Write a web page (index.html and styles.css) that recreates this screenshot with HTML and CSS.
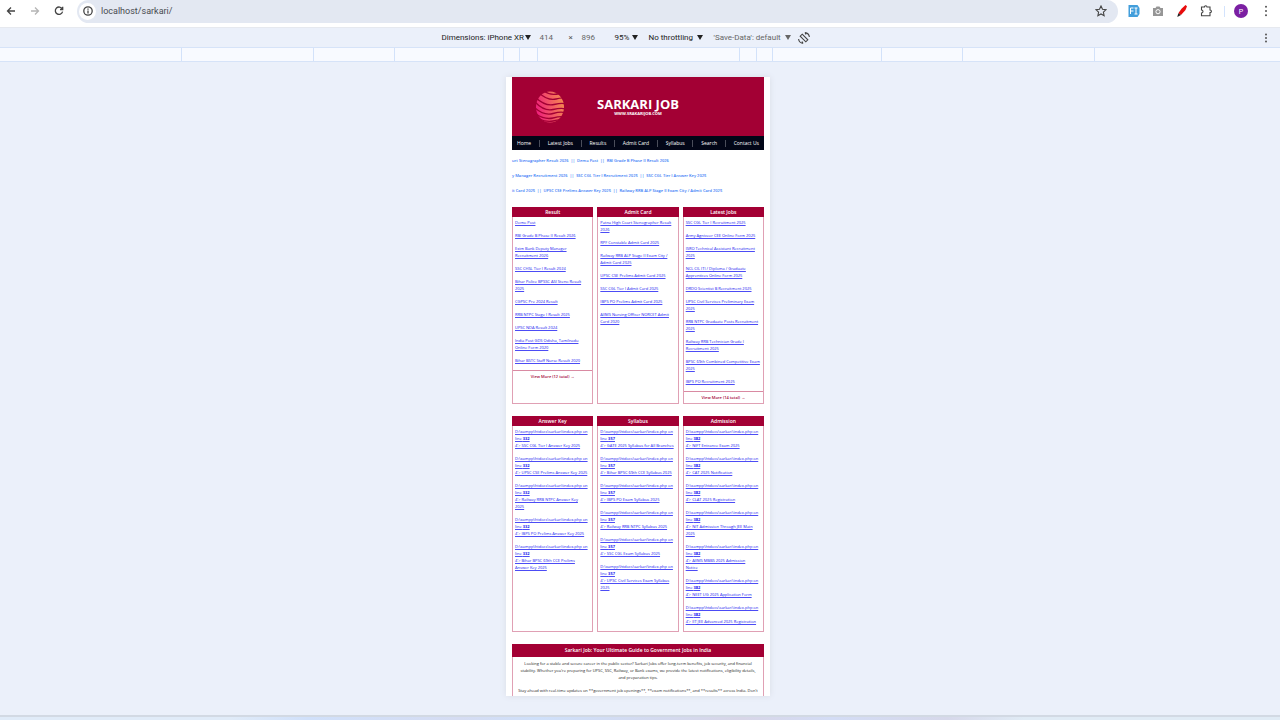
FILE: index.html
```html
<!DOCTYPE html>
<html lang="en">
<head>
<meta charset="utf-8">
<title>localhost/sarkari</title>
<link rel="stylesheet" href="styles.css">
</head>
<body>
<header class="browser-bar">
  <button class="icon-btn" aria-label="Back"><svg viewBox="0 0 12 12"><path d="M10 6H2.500M6 2.500 2.500 6 6 9.500"/></svg></button>
  <button class="icon-btn disabled" aria-label="Forward"><svg viewBox="0 0 12 12"><path d="M2 6h7.500M6 2.500 9.500 6 6 9.500"/></svg></button>
  <button class="icon-btn" aria-label="Reload"><svg viewBox="0 0 12 12"><path d="M9.300 4A3.700 3.700 0 1 0 9.600 6.700M9.700 1.700V4.500H7"/></svg></button>
  <div class="address">
    <button class="info" aria-label="Site information"><svg viewBox="0 0 12 12"><circle cx="6" cy="6" r="4.200"/><path d="M6 5.500v3M6 3.500v1.200"/></svg></button>
    <input class="url" type="text" aria-label="Address" value="localhost/sarkari/">
    <button class="icon-btn" aria-label="Bookmark"><svg class="thin" viewBox="0 0 12 12"><path d="M6 1l1.500 3.300 3.500.4-2.600 2.400.7 3.600L6 8.900l-3.100 1.800.7-3.600L1 4.700l3.500-.4z"/></svg></button>
  </div>
  <div class="extensions">
    <button class="icon-btn" aria-label="Font finder"><svg viewBox="0 0 12 12"><path class="sky" d="M.5 0h9l2 3v6l-2 3h-9z"/><path class="white-line" d="M2.500 9V3h3M2.500 6h3M6.500 3h3M6.500 9h3M8 3v6"/></svg></button>
    <button class="icon-btn" aria-label="Screenshot"><svg viewBox="0 0 12 12"><path class="grey" d="M1 3h2.500l1-1.500h3L8.500 3H11v8H1z"/><circle class="lens" cx="6" cy="6.700" r="2.100"/></svg></button>
    <button class="icon-btn" aria-label="Marker"><svg viewBox="0 0 12 12"><path class="red" d="M9.500 0 11 1.200 9.500 5 5 10 2.300 8.300 5.500 3.800z"/><path class="black" d="M2.300 8.300 5 10 1.300 12z"/></svg></button>
    <button class="icon-btn" aria-label="Extensions"><svg class="thin" viewBox="0 0 12 12"><path d="M1.500 2H4.500Q4.500 .8 5.700 .8T7 2H10V5Q11.400 5 11.400 6.300T10 7.600V10.800H1.500V8Q3 8 3 6.500T1.500 5z"/></svg></button>
    <span class="divider"></span>
    <button class="avatar">P</button>
    <button class="icon-btn" aria-label="Menu"><svg class="dots" viewBox="0 0 12 12"><circle cx="6" cy="1.700" r="1"/><circle cx="6" cy="6" r="1"/><circle cx="6" cy="10.300" r="1"/></svg></button>
  </div>
</header>
<div class="device-bar">
  <div class="device-tools">
    <button class="drop wide">Dimensions: iPhone XR <i class="caret"></i></button>
    <input class="dim" aria-label="Width" value="414"><span class="times">×</span><input class="dim" aria-label="Height" value="896">
    <button class="drop zoom">95% <i class="caret"></i></button>
    <button class="drop throttle">No throttling <i class="caret"></i></button>
    <button class="drop muted">'Save-Data': default <i class="caret"></i></button>
    <button class="icon-btn" aria-label="Rotate"><svg class="thin" viewBox="0 0 12 12"><path d="M4.200 2.200 9.800 7.800 7.800 9.800 2.200 4.200zM7 .6Q11 1.200 11.400 5M5 11.400Q1 10.800.6 7M7 .6l1 2M5 11.400 4 9.400"/></svg></button>
  </div>
  <button class="icon-btn more" aria-label="More options"><svg class="dots" viewBox="0 0 12 12"><circle cx="6" cy="2.500" r="1"/><circle cx="6" cy="6" r="1"/><circle cx="6" cy="9.500" r="1"/></svg></button>
</div>
<div class="ruler"><i></i><i></i><i></i><i></i><i></i><i></i><i></i><i></i><i></i><i></i><i></i><i></i><i></i></div>
<main class="stage">
  <div class="device">
    <header class="banner">
      <svg class="globe" viewBox="0 0 30 32"><defs><linearGradient id="g" x1="0" y1="0.600" x2="1" y2="0.300"><stop offset="0" stop-color="#ee1f7c"/><stop offset="1" stop-color="#f58a50"/></linearGradient><clipPath id="c"><ellipse cx="15" cy="16" rx="15" ry="16"/></clipPath></defs><ellipse cx="15" cy="16" rx="14" ry="15.500" fill="url(#g)" stroke="none"/><g clip-path="url(#c)" fill="none" stroke="#a30034" stroke-width="1.300"><path d="M9 0Q15 5 25 2.500"/><path d="M4 2Q13 10 21 8T30 8"/><path d="M0 6Q10 15.500 19 13.500T30 13"/><path d="M0 11Q9 20.500 18 18.500T30 18"/><path d="M0 17Q9 25 18 22.500T30 22"/><path d="M1 23Q10 29 18 27T29 26"/><path d="M4 28Q12 31.500 18 30T26 29"/></g></svg>
      <div class="brand"><h1>SARKARI JOB</h1><p>WWW.SRAKARIJOB.COM</p></div>
    </header>
    <nav class="menu"><a href="#">Home</a><i></i><a href="#">Latest Jobs</a><i></i><a href="#">Results</a><i></i><a href="#">Admit Card</a><i></i><a href="#">Syllabus</a><i></i><a href="#">Search</a><i></i><a href="#">Contact Us</a></nav>
    <div class="tickers">
      <p>urt Stenographer Result 2026 &nbsp;||&nbsp; Demo Post &nbsp;||&nbsp; RBI Grade B Phase II Result 2026</p>
      <p>y Manager Recruitment 2026 &nbsp;||&nbsp; SSC CGL Tier I Recruitment 2025 &nbsp;||&nbsp; SSC CGL Tier I Answer Key 2025</p>
      <p>it Card 2025 &nbsp;||&nbsp; UPSC CSE Prelims Answer Key 2025 &nbsp;||&nbsp; Railway RRB ALP Stage II Exam City / Admit Card 2025</p>
    </div>
    <div class="boxes">
      <section class="box"><h2>Result</h2><ul>
        <li><a href="#">Demo Post</a></li>
        <li><a href="#">RBI Grade B Phase II Result 2026</a></li>
        <li><a href="#">Exim Bank Deputy Manager<br>Recruitment 2026</a></li>
        <li><a href="#">SSC CHSL Tier I Result 2024</a></li>
        <li><a href="#">Bihar Police BPSSC ASI Steno Result<br>2025</a></li>
        <li><a href="#">CGPSC Pre 2024 Result</a></li>
        <li><a href="#">RRB NTPC Stage I Result 2025</a></li>
        <li><a href="#">UPSC NDA Result 2024</a></li>
        <li><a href="#">India Post GDS Odisha, Tamilnadu<br>Online Form 2020</a></li>
        <li><a href="#">Bihar BSTC Staff Nurse Result 2020</a></li>
      </ul><a class="view" href="#">View More (12 total) →</a></section>
      <section class="box"><h2>Admit Card</h2><ul>
        <li><a href="#">Patna High Court Stenographer Result<br>2026</a></li>
        <li><a href="#">RPF Constable Admit Card 2025</a></li>
        <li><a href="#">Railway RRB ALP Stage II Exam City /<br>Admit Card 2025</a></li>
        <li><a href="#">UPSC CSE Prelims Admit Card 2025</a></li>
        <li><a href="#">SSC CGL Tier I Admit Card 2025</a></li>
        <li><a href="#">IBPS PO Prelims Admit Card 2025</a></li>
        <li><a href="#">AIIMS Nursing Officer NORCET Admit<br>Card 2020</a></li>
      </ul></section>
      <section class="box"><h2>Latest Jobs</h2><ul>
        <li><a href="#">SSC CGL Tier I Recruitment 2025</a></li>
        <li><a href="#">Army Agniveer CEE Online Form 2025</a></li>
        <li><a href="#">ISRO Technical Assistant Recruitment<br>2025</a></li>
        <li><a href="#">NCL CIL ITI / Diploma / Graduate<br>Apprentices Online Form 2025</a></li>
        <li><a href="#">DRDO Scientist B Recruitment 2025</a></li>
        <li><a href="#">UPSC Civil Services Preliminary Exam<br>2025</a></li>
        <li><a href="#">RRB NTPC Graduate Posts Recruitment<br>2025</a></li>
        <li><a href="#">Railway RRB Technician Grade I<br>Recruitment 2025</a></li>
        <li><a href="#">BPSC 69th Combined Competitive Exam<br>2025</a></li>
        <li><a href="#">IBPS PO Recruitment 2025</a></li>
      </ul><a class="view" href="#">View More (14 total) →</a></section>
    </div>
    <div class="boxes">
      <section class="box"><h2>Answer Key</h2><ul>
        <li><a href="#">D:\xampp\htdocs\sarkari\index.php on<br>line <b>332</b><br>4'&gt; SSC CGL Tier I Answer Key 2025</a></li>
        <li><a href="#">D:\xampp\htdocs\sarkari\index.php on<br>line <b>332</b><br>4'&gt; UPSC CSE Prelims Answer Key 2025</a></li>
        <li><a href="#">D:\xampp\htdocs\sarkari\index.php on<br>line <b>332</b><br>4'&gt; Railway RRB NTPC Answer Key<br>2025</a></li>
        <li><a href="#">D:\xampp\htdocs\sarkari\index.php on<br>line <b>332</b><br>4'&gt; IBPS PO Prelims Answer Key 2025</a></li>
        <li><a href="#">D:\xampp\htdocs\sarkari\index.php on<br>line <b>332</b><br>4'&gt; Bihar BPSC 69th CCE Prelims<br>Answer Key 2025</a></li>
      </ul></section>
      <section class="box"><h2>Syllabus</h2><ul>
        <li><a href="#">D:\xampp\htdocs\sarkari\index.php on<br>line <b>357</b><br>4'&gt; GATE 2025 Syllabus for All Branches</a></li>
        <li><a href="#">D:\xampp\htdocs\sarkari\index.php on<br>line <b>357</b><br>4'&gt; Bihar BPSC 69th CCE Syllabus 2025</a></li>
        <li><a href="#">D:\xampp\htdocs\sarkari\index.php on<br>line <b>357</b><br>4'&gt; IBPS PO Exam Syllabus 2025</a></li>
        <li><a href="#">D:\xampp\htdocs\sarkari\index.php on<br>line <b>357</b><br>4'&gt; Railway RRB NTPC Syllabus 2025</a></li>
        <li><a href="#">D:\xampp\htdocs\sarkari\index.php on<br>line <b>357</b><br>4'&gt; SSC CGL Exam Syllabus 2025</a></li>
        <li><a href="#">D:\xampp\htdocs\sarkari\index.php on<br>line <b>357</b><br>4'&gt; UPSC Civil Services Exam Syllabus<br>2025</a></li>
      </ul></section>
      <section class="box"><h2>Admission</h2><ul>
        <li><a href="#">D:\xampp\htdocs\sarkari\index.php on<br>line <b>382</b><br>4'&gt; NIFT Entrance Exam 2025</a></li>
        <li><a href="#">D:\xampp\htdocs\sarkari\index.php on<br>line <b>382</b><br>4'&gt; CAT 2025 Notification</a></li>
        <li><a href="#">D:\xampp\htdocs\sarkari\index.php on<br>line <b>382</b><br>4'&gt; CLAT 2025 Registration</a></li>
        <li><a href="#">D:\xampp\htdocs\sarkari\index.php on<br>line <b>382</b><br>4'&gt; NIT Admission Through JEE Main<br>2025</a></li>
        <li><a href="#">D:\xampp\htdocs\sarkari\index.php on<br>line <b>382</b><br>4'&gt; AIIMS MBBS 2025 Admission<br>Notice</a></li>
        <li><a href="#">D:\xampp\htdocs\sarkari\index.php on<br>line <b>382</b><br>4'&gt; NEET UG 2025 Application Form</a></li>
        <li><a href="#">D:\xampp\htdocs\sarkari\index.php on<br>line <b>382</b><br>4'&gt; IIT JEE Advanced 2025 Registration</a></li>
      </ul></section>
    </div>
    <section class="guide">
      <h2>Sarkari Job: Your Ultimate Guide to Government Jobs in India</h2>
      <p>Looking for a stable and secure career in the public sector? Sarkari Jobs offer long-term benefits, job security, and financial<br>stability. Whether you're preparing for UPSC, SSC, Railway, or Bank exams, we provide the latest notifications, eligibility details,<br>and preparation tips.</p>
      <p>Stay ahead with real-time updates on **government job openings**, **exam notifications**, and **results** across India. Don't<br>miss out on your dream job; bookmark this page and check back daily.</p>
    </section>
  </div>
</main>
<footer class="edge"></footer>
</body>
</html>
```
FILE: styles.css
```css
* { box-sizing: border-box; }
body {
  margin: 0;
  height: 100vh;
  display: flex;
  flex-direction: column;
  overflow: hidden;
  background: #ebf0fa;
  font-family: "Open Sans", "Noto Sans", sans-serif;
}
button, input {
  border: 0;
  padding: 0;
  margin: 0;
  background: none;
  font: inherit;
  color: inherit;
}
h1, h2, p, ul { margin: 0; padding: 0; }
ul { list-style: none; }
a { color: inherit; text-decoration: none; }
svg {
  display: block;
  width: 12px;
  height: 12px;
  fill: none;
  stroke: #444;
  stroke-width: 1.3;
}
svg.thin { stroke-width: 1.1; }
svg.dots { fill: #555; stroke: none; }
.browser-bar {
  display: flex;
  align-items: center;
  height: 28px;
  padding: 0 5px 5px;
  background: #fff;
  border-bottom: 1px solid #e6e9ef;
}
.icon-btn { width: 12px; height: 12px; flex: none; }
.browser-bar > .icon-btn { margin-right: 12px; }
.disabled svg { stroke: #b5b5b5; }
.address {
  flex: 1;
  display: flex;
  align-items: center;
  height: 23px;
  padding: 0 11px 0 2px;
  border-radius: 12px;
  background: #e3e8f2;
}
.info {
  display: grid;
  place-items: center;
  width: 17px;
  height: 17px;
  border-radius: 50%;
  background: #fff;
}
.url {
  flex: 1;
  margin-left: 5px;
  font: 9px/16px Roboto, sans-serif;
  color: #484b50;
}
.extensions { display: flex; align-items: center; gap: 9px; margin-left: 10px; }
.extensions .icon-btn, .avatar { margin-right: 3px; }
svg .sky { fill: #429edb; stroke: none; }
.white-line { stroke: #fff; stroke-width: 1; }
.grey { fill: #969696; stroke: none; }
.lens { stroke: #fff; stroke-width: 1; }
.red { fill: #e80c0c; stroke: none; }
.black { fill: #222; stroke: none; }
.divider { width: 1px; height: 11px; background: #d3e3fd; }
.avatar {
  width: 14px;
  height: 14px;
  border-radius: 50%;
  background: #7b1fa2;
  color: #fff;
  font-size: 8px;
  line-height: 14px;
}
.device-bar {
  display: grid;
  grid-template-columns: 441fr auto 461fr;
  align-items: center;
  height: 20px;
  padding-right: 8px;
  border-bottom: 1px solid #d6e3f8;
  font: 8px/14px Roboto, sans-serif;
  color: #222;
}
.device-tools {
  grid-column: 2;
  display: flex;
  align-items: center;
  white-space: nowrap;
}
.more { justify-self: end; }
.drop { display: flex; align-items: center; justify-content: space-between; }
.wide { width: 90px; }
.zoom { width: 24px; margin-left: 11px; }
.throttle { width: 55px; margin-left: 10px; }
.muted { width: 78px; margin: 0 7px 0 10px; color: #666; }
.caret {
  border: 3px solid transparent;
  border-top: 5px solid currentColor;
  border-bottom: 0;
}
.dim { width: 22px; margin-left: 8px; color: #666; }
.times { margin-left: 7px; width: 5px; color: #555; }
.ruler {
  display: grid;
  grid-template-columns: 182fr 132fr 81fr 109fr 16fr 18fr 202fr 17fr 16fr 109fr 81fr 132fr 185fr;
  height: 14px;
  background: #f8faff;
  border-bottom: 1px solid #d6e3f8;
}
.ruler i { border-right: 1px solid #d3e2fa; }
.ruler i:last-child { border: 0; }
.stage {
  flex: 1;
  min-height: 0;
  display: flex;
  justify-content: center;
  padding: 15px 4px 19px 0;
}
.device {
  width: 264px;
  max-width: 100%;
  padding: 0 6px;
  overflow: hidden;
  background: #fff;
  box-shadow: 0 0 6px #d9dde6;
}
.banner {
  display: grid;
  grid-template-columns: 76px 1fr 76px;
  align-items: center;
  height: 59px;
  background: #a30034;
  color: #fff;
  text-align: center;
}
.globe { width: 30px; height: 32px; margin-left: 23px; }
.brand h1 { font-size: 13px; line-height: 14px; }
.brand p { font-size: 4px; line-height: 6px; font-weight: 700; }
.menu {
  display: flex;
  align-items: center;
  justify-content: space-between;
  height: 14px;
  padding: 0 5px;
  background: #020617;
  color: #fff;
  font-size: 5px;
  line-height: 8px;
}
.menu i { width: 1px; height: 7px; background: #4a4d5a; }
.tickers {
  display: grid;
  gap: 8px;
  padding: 7px 0 13px;
  font-size: 4px;
  line-height: 7px;
  font-weight: 600;
  color: #3478f6;
  white-space: nowrap;
}
.boxes {
  display: grid;
  grid-template-columns: repeat(3, minmax(0, 1fr));
  gap: 4px;
  margin-bottom: 12px;
}
.box {
  border: 1px solid #e0a0b4;
  font-size: 4px;
  line-height: 7px;
  white-space: nowrap;
}
.box h2 {
  margin: -1px -1px 0;
  background: #a30034;
  color: #fff;
  font-size: 5px;
  line-height: 10px;
  font-weight: 600;
  text-align: center;
}
.box ul { display: grid; gap: 6px; padding: 2px 2px 6px; }
.box li a { color: #1414f0; text-decoration: underline; text-decoration-color: #4c4cf5; }
.view {
  display: block;
  border-top: 1px solid #d98aa2;
  padding: 2px 0;
  text-align: center;
  color: #a30034;
  font-weight: 600;
}
.guide {
  border: 1px solid #e0a0b4;
  font-size: 4px;
  line-height: 7px;
  text-align: center;
  color: #222;
  white-space: nowrap;
}
.guide h2 {
  margin: -1px -1px 3px;
  background: #a30034;
  color: #fff;
  font-size: 5px;
  line-height: 13px;
  font-weight: 600;
}
.guide p { margin-bottom: 6px; }
.edge {
  height: 5px;
  border-top: 2px solid #d2d9e3;
  background: linear-gradient(90deg, #e0ebf8 18%, #d0e0fa 24%, #d5dcf2 36%, #cfe0fa 42%, #d8d6e8 58%, #d3dcf5 65%, #d6d8ea 74%, #e0ebf5 80%);
}
```
